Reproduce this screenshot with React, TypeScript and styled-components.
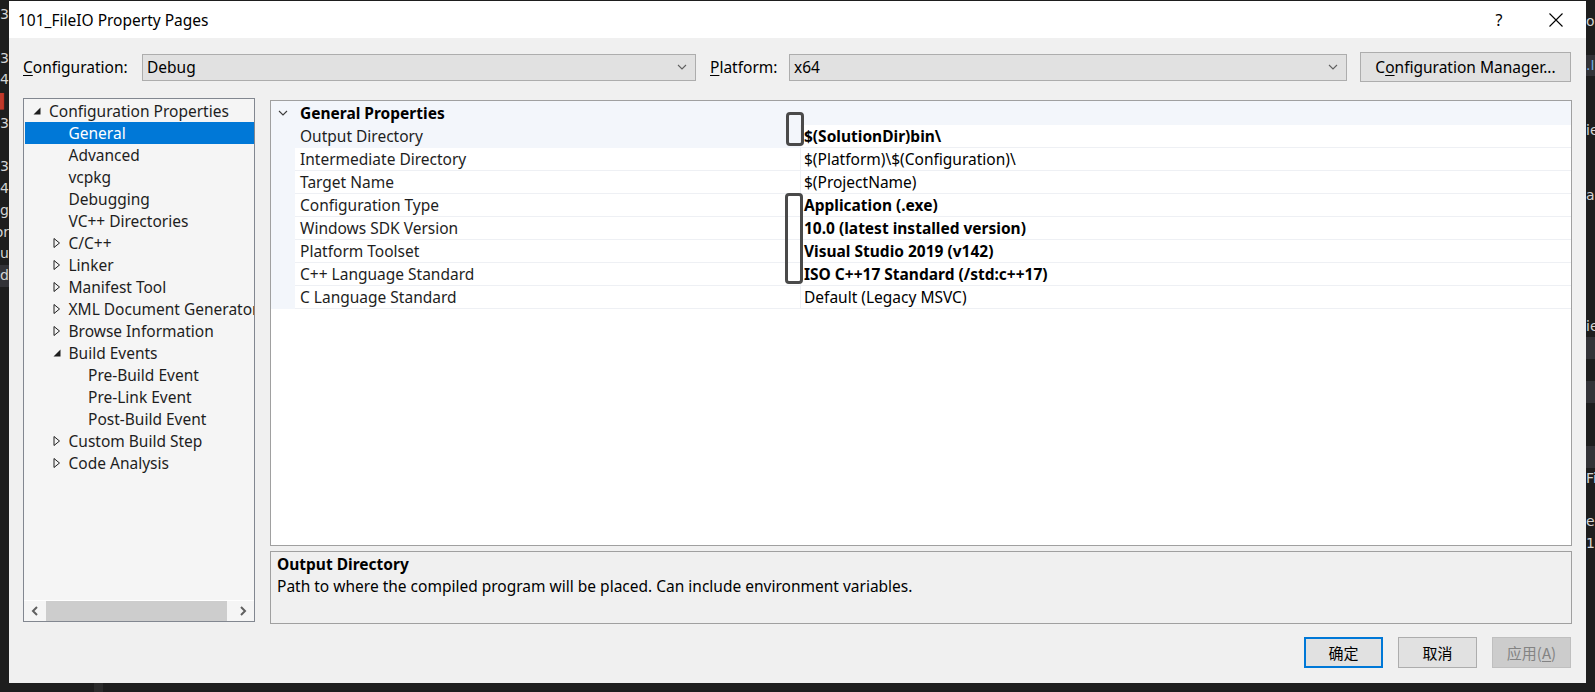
import React from "react";
import styled, { createGlobalStyle } from "styled-components";

const GlobalStyle = createGlobalStyle`
  html, body { margin: 0; padding: 0; background: #1e1e1e; }
  body { font-family: "Noto Sans", "Noto Sans CJK SC", sans-serif; }
  * { box-sizing: border-box; }
`;

const UI_FONT = `"Noto Sans", "Noto Sans CJK SC", sans-serif`;

const Desktop = styled.div`
  width: 1595px;
  height: 692px;
  overflow: hidden;
  padding-top: 1px;
  display: grid;
  grid-template-columns: 9px 1577px 9px;
  grid-template-rows: 682px 9px;
  background: #1e1e1e;
`;

const EditorStrip = styled.div<{ $side: "left" | "right" }>`
  overflow: hidden;
  display: flex;
  flex-direction: column;
  align-items: ${(p) => (p.$side === "left" ? "flex-end" : "flex-start")};
  padding-top: ${(p) => (p.$side === "left" ? "3px" : "10px")};
  font-family: "DejaVu Sans", sans-serif;
  font-size: 14px;
`;

const EditorLine = styled.div<{ $color?: string; $band?: boolean }>`
  height: 21.75px;
  line-height: 21.75px;
  white-space: nowrap;
  flex-shrink: 0;
  min-width: 9px;
  color: ${(p) => p.$color || "#d4d4d4"};
  background: ${(p) => (p.$band ? "#333337" : "transparent")};
`;

const BottomStrip = styled.div`
  grid-column: 1 / -1;
  display: flex;
  background: #1e1e1e;
`;

const BottomBand = styled.div`
  margin-left: 94px;
  width: 9px;
  background: #2b2b2b;
`;

const Dialog = styled.div`
  background: #f0f0f0;
  display: flex;
  flex-direction: column;
  font-family: ${UI_FONT};
  font-size: 15.5px;
  color: #000;
`;

const TitleBar = styled.div`
  height: 37px;
  background: #ffffff;
  display: flex;
  align-items: center;
  padding-left: 9px;
  padding-right: 7px;
`;

const TitleText = styled.div`
  flex: 1;
  font-size: 15.5px;
  color: #000;
`;

const TitleButton = styled.div`
  width: 46px;
  height: 30px;
  display: flex;
  align-items: center;
  justify-content: center;
  font-size: 16px;
  color: #000;
  & + & { margin-left: 11px; }
`;

const ConfigBar = styled.div`
  display: flex;
  align-items: center;
  padding: 14px 15px 0 14px;
  height: 44px;
  margin-bottom: 16px;
`;

const FieldLabel = styled.div<{ $w: number }>`
  width: ${(p) => p.$w}px;
  flex-shrink: 0;
  white-space: nowrap;
  color: #000;
`;

const Accel = styled.span`
  text-decoration: underline;
  text-underline-offset: 2px;
`;

const Combo = styled.div<{ $w: number }>`
  width: ${(p) => p.$w}px;
  height: 27px;
  flex-shrink: 0;
  border: 1px solid #adadad;
  background: #e1e1e1;
  display: flex;
  align-items: center;
  padding: 0 8px 0 4px;
`;

const ComboText = styled.div`
  flex: 1;
`;

const Gap = styled.div<{ $w: number }>`
  width: ${(p) => p.$w}px;
  flex-shrink: 0;
`;

const PushButton = styled.div<{ $w: number; $h: number; $variant?: "default" | "normal" | "disabled" }>`
  width: ${(p) => p.$w}px;
  height: ${(p) => p.$h}px;
  flex-shrink: 0;
  display: flex;
  align-items: center;
  justify-content: center;
  white-space: nowrap;
  background: ${(p) => (p.$variant === "disabled" ? "#cccccc" : "#e1e1e1")};
  border: ${(p) =>
    p.$variant === "default" ? "2px solid #0078d7" : p.$variant === "disabled" ? "1px solid #bfbfbf" : "1px solid #adadad"};
  color: ${(p) => (p.$variant === "disabled" ? "#838383" : "#000")};
`;

const Main = styled.div`
  height: 526px;
  display: flex;
  gap: 15px;
  padding: 0 14px;
`;

const Tree = styled.div`
  width: 232px;
  height: 524px;
  flex-shrink: 0;
  border: 1px solid #828790;
  background: #f5f5f5;
  display: flex;
  flex-direction: column;
`;

const TreeRows = styled.div`
  flex: 1;
  padding-top: 1px;
  overflow: hidden;
`;

const TreeRow = styled.div<{ $level: number; $selected?: boolean }>`
  height: 22px;
  display: flex;
  align-items: center;
  margin-left: 1px;
  padding-left: ${(p) => 8 + p.$level * 19.5}px;
  white-space: nowrap;
  overflow: hidden;
  background: ${(p) => (p.$selected ? "#0078d7" : "transparent")};
  color: ${(p) => (p.$selected ? "#ffffff" : "#1e1e1e")};
`;

const Expander = styled.div`
  width: 16px;
  flex-shrink: 0;
  display: flex;
  align-items: center;
`;

const HScroll = styled.div`
  height: 21px;
  border-top: 1px solid #ffffff;
  display: flex;
`;

const ScrollArrow = styled.div`
  width: 22px;
  display: flex;
  align-items: center;
  justify-content: center;
`;

const ScrollTrack = styled.div`
  flex: 1;
  display: flex;
`;

const ScrollThumb = styled.div<{ $w: number }>`
  width: ${(p) => p.$w}px;
  background: #cdcdcd;
`;

const RightColumn = styled.div`
  width: 1302px;
  flex-shrink: 0;
  padding-top: 2px;
  display: flex;
  flex-direction: column;
  gap: 5px;
`;

const Grid = styled.div`
  flex: 1;
  position: relative;
  background: #ffffff;
  border: 1px solid #a0a0a0;
`;

const GridHeader = styled.div`
  height: 24px;
  background: #f3f6fb;
  display: flex;
  align-items: center;
  font-weight: 700;
  color: #000;
`;

const HeaderChevron = styled.div`
  width: 29px;
  padding-left: 7px;
  display: flex;
  align-items: center;
`;

const PropRow = styled.div`
  height: 23px;
  display: grid;
  grid-template-columns: 24px 505px 1px 1fr;
`;

const Margin = styled.div`
  background: #f3f6fb;
`;

const PropLabel = styled.div<{ $selected?: boolean }>`
  padding-left: 5px;
  display: flex;
  align-items: center;
  white-space: nowrap;
  color: #1e1e1e;
  background: ${(p) => (p.$selected ? "#f3f6fb" : "#ffffff")};
  border-bottom: 1px solid ${(p) => (p.$selected ? "#f3f6fb" : "#eef0f4")};
`;

const Divider = styled.div`
  background: #eef0f4;
`;

const PropValue = styled.div<{ $bold?: boolean }>`
  padding-left: 3px;
  display: flex;
  align-items: center;
  white-space: nowrap;
  color: #000;
  font-weight: ${(p) => (p.$bold ? 700 : 400)};
  border-bottom: 1px solid #eef0f4;
`;

const Marker = styled.div<{ $left: number; $top: number; $w: number; $h: number }>`
  position: absolute;
  left: ${(p) => p.$left}px;
  top: ${(p) => p.$top}px;
  width: ${(p) => p.$w}px;
  height: ${(p) => p.$h}px;
  border: 3px solid #4a4a4a;
  border-radius: 4px;
`;

const Description = styled.div`
  height: 73px;
  border: 1px solid #a0a0a0;
  background: #f0f0f0;
  padding: 1px 7px 0 6px;
  line-height: 22px;
  color: #000;
`;

const DescTitle = styled.div`
  font-weight: 700;
`;

const Footer = styled.div`
  margin-top: 13px;
  height: 31px;
  display: flex;
  justify-content: flex-end;
  gap: 15px;
  padding-right: 15px;
  font-family: "Noto Sans CJK SC", "Noto Sans", sans-serif;
  font-size: 15px;
`;

const ExpandedGlyph = () => (
  <svg width="8" height="8" viewBox="0 0 8 8">
    <polygon points="7.5,0.5 7.5,7.5 0.5,7.5" fill="#1e1e1e" />
  </svg>
);

const CollapsedGlyph = () => (
  <svg width="8" height="10" viewBox="0 0 8 10">
    <polygon points="1,0.5 6.5,5 1,9.5" fill="none" stroke="#1e1e1e" strokeWidth="1" />
  </svg>
);

const SmallChevron = ({ color = "#606060" }: { color?: string }) => (
  <svg width="10" height="6" viewBox="0 0 10 6">
    <polyline points="1,1 5,5 9,1" fill="none" stroke={color} strokeWidth="1.1" />
  </svg>
);

const ArrowGlyph = ({ dir }: { dir: "left" | "right" }) => (
  <svg width="8" height="10" viewBox="0 0 8 10">
    <polyline
      points={dir === "left" ? "6,1 2,5 6,9" : "2,1 6,5 2,9"}
      fill="none"
      stroke="#606060"
      strokeWidth="2"
    />
  </svg>
);

type TreeItem = { label: string; level: number; exp?: "open" | "closed"; selected?: boolean };

const treeItems: TreeItem[] = [
  { label: "Configuration Properties", level: 0, exp: "open" },
  { label: "General", level: 1, selected: true },
  { label: "Advanced", level: 1 },
  { label: "vcpkg", level: 1 },
  { label: "Debugging", level: 1 },
  { label: "VC++ Directories", level: 1 },
  { label: "C/C++", level: 1, exp: "closed" },
  { label: "Linker", level: 1, exp: "closed" },
  { label: "Manifest Tool", level: 1, exp: "closed" },
  { label: "XML Document Generator", level: 1, exp: "closed" },
  { label: "Browse Information", level: 1, exp: "closed" },
  { label: "Build Events", level: 1, exp: "open" },
  { label: "Pre-Build Event", level: 2 },
  { label: "Pre-Link Event", level: 2 },
  { label: "Post-Build Event", level: 2 },
  { label: "Custom Build Step", level: 1, exp: "closed" },
  { label: "Code Analysis", level: 1, exp: "closed" },
];

type Prop = { name: string; value: string; bold?: boolean; selected?: boolean };

const props: Prop[] = [
  { name: "Output Directory", value: "$(SolutionDir)bin\\", bold: true, selected: true },
  { name: "Intermediate Directory", value: "$(Platform)\\$(Configuration)\\" },
  { name: "Target Name", value: "$(ProjectName)" },
  { name: "Configuration Type", value: "Application (.exe)", bold: true },
  { name: "Windows SDK Version", value: "10.0 (latest installed version)", bold: true },
  { name: "Platform Toolset", value: "Visual Studio 2019 (v142)", bold: true },
  { name: "C++ Language Standard", value: "ISO C++17 Standard (/std:c++17)", bold: true },
  { name: "C Language Standard", value: "Default (Legacy MSVC)" },
];

const leftLines: { text: string; color?: string; band?: boolean }[] = [
  { text: "B3" },
  { text: "" },
  { text: "in3" },
  { text: "4" },
  { text: "▌", color: "#c0392b" },
  { text: "B3" },
  { text: "" },
  { text: "in3" },
  { text: "4" },
  { text: "log" },
  { text: "for" },
  { text: "Su" },
  { text: "dd", band: true },
];

const rightLines: { text: string; color?: string; band?: boolean }[] = [
  { text: "o" },
  { text: "" },
  { text: ".I", color: "#6fa8dc", band: true },
  { text: "" },
  { text: "" },
  { text: "ie" },
  { text: "" },
  { text: "" },
  { text: "a" },
  { text: "" },
  { text: "" },
  { text: "" },
  { text: "" },
  { text: "" },
  { text: "ie" },
  { text: "", band: true },
  { text: "" },
  { text: "", band: true },
  { text: "" },
  { text: "" },
  { text: "", band: true },
  { text: "Fil" },
  { text: "" },
  { text: "er" },
  { text: "1" },
];

export default function App() {
  return (
    <>
      <GlobalStyle />
      <Desktop>
        <EditorStrip $side="left">
          {leftLines.map((l, i) => (
            <EditorLine key={i} $color={l.color} $band={l.band}>
              {l.text}
            </EditorLine>
          ))}
        </EditorStrip>

        <Dialog>
          <TitleBar>
            <TitleText>101_FileIO Property Pages</TitleText>
            <TitleButton>?</TitleButton>
            <TitleButton>
              <svg width="14" height="14" viewBox="0 0 14 14">
                <path d="M0.5 0.5 L13.5 13.5 M13.5 0.5 L0.5 13.5" stroke="#000" strokeWidth="1.1" />
              </svg>
            </TitleButton>
          </TitleBar>

          <ConfigBar>
            <FieldLabel $w={119}>
              <Accel>C</Accel>onfiguration:
            </FieldLabel>
            <Combo $w={554}>
              <ComboText>Debug</ComboText>
              <SmallChevron />
            </Combo>
            <Gap $w={14} />
            <FieldLabel $w={79}>
              <Accel>P</Accel>latform:
            </FieldLabel>
            <Combo $w={558}>
              <ComboText>x64</ComboText>
              <SmallChevron />
            </Combo>
            <Gap $w={13} />
            <PushButton $w={211} $h={30}>
              C<Accel>o</Accel>nfiguration Manager...
            </PushButton>
          </ConfigBar>

          <Main>
            <Tree>
              <TreeRows>
                {treeItems.map((t, i) => (
                  <TreeRow key={i} $level={t.level} $selected={t.selected}>
                    <Expander>
                      {t.exp === "open" && <ExpandedGlyph />}
                      {t.exp === "closed" && <CollapsedGlyph />}
                    </Expander>
                    {t.label}
                  </TreeRow>
                ))}
              </TreeRows>
              <HScroll>
                <ScrollArrow>
                  <ArrowGlyph dir="left" />
                </ScrollArrow>
                <ScrollTrack>
                  <ScrollThumb $w={181} />
                </ScrollTrack>
                <ScrollArrow>
                  <ArrowGlyph dir="right" />
                </ScrollArrow>
              </HScroll>
            </Tree>

            <RightColumn>
              <Grid>
                <GridHeader>
                  <HeaderChevron>
                    <SmallChevron color="#3c3c3c" />
                  </HeaderChevron>
                  General Properties
                </GridHeader>
                {props.map((p, i) => (
                  <PropRow key={i}>
                    <Margin />
                    <PropLabel $selected={p.selected}>{p.name}</PropLabel>
                    <Divider />
                    <PropValue $bold={p.bold}>{p.value}</PropValue>
                  </PropRow>
                ))}
                <Marker $left={515} $top={11} $w={18} $h={34} />
                <Marker $left={514} $top={92} $w={18} $h={91} />
              </Grid>
              <Description>
                <DescTitle>Output Directory</DescTitle>
                <div>Path to where the compiled program will be placed. Can include environment variables.</div>
              </Description>
            </RightColumn>
          </Main>

          <Footer>
            <PushButton $w={79} $h={31} $variant="default">
              确定
            </PushButton>
            <PushButton $w={79} $h={31}>
              取消
            </PushButton>
            <PushButton $w={79} $h={31} $variant="disabled">
              应用(<Accel>A</Accel>)
            </PushButton>
          </Footer>
        </Dialog>

        <EditorStrip $side="right">
          {rightLines.map((l, i) => (
            <EditorLine key={i} $color={l.color} $band={l.band}>
              {l.text}
            </EditorLine>
          ))}
        </EditorStrip>

        <BottomStrip>
          <BottomBand />
        </BottomStrip>
      </Desktop>
    </>
  );
}
